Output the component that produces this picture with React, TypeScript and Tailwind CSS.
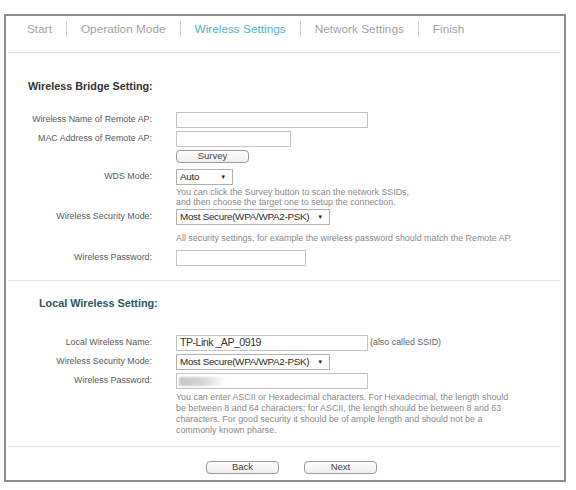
const font = { fontFamily: '"Liberation Sans", Arial, sans-serif' };

function Tab({ label, active }: { label: string; active?: boolean }) {
  return (
    <span className={`text-[11.8px] leading-[16px] ${active ? "text-[#4fb5c6]" : "text-[#a3a3a3]"}`}>
      {label}
    </span>
  );
}

function Sep() {
  return <span className="mx-[14px] h-[16px] w-px bg-[#d0d0d0]" />;
}

function Row({ label, children, className = "" }: { label: string; children: React.ReactNode; className?: string }) {
  return (
    <div className={`flex items-center ${className}`}>
      <div className="w-[146px] shrink-0 text-right text-[8.9px] text-[#5a5a5a]">{label}</div>
      <div className="ml-[24px] flex items-center">{children}</div>
    </div>
  );
}

function Box({ w, children }: { w: string; children?: React.ReactNode }) {
  return (
    <div className={`${w} relative flex h-[16px] items-center border border-[#c4c4c4] bg-white pl-[3px] text-[10.6px] tracking-[-0.5px] text-[#333]`}>
      {children}
    </div>
  );
}

function Select({ w, value }: { w: string; value: string }) {
  return (
    <div className={`${w} flex h-[16px] items-center justify-between border border-[#b0b0b0] bg-white pl-[3px] pr-[6px] text-[9.9px] tracking-[-0.3px] text-[#2a2a2a]`}>
      <span>{value}</span>
      <span className="text-[6px] text-[#222]">▼</span>
    </div>
  );
}

function Btn({ label }: { label: string }) {
  return (
    <div className="flex h-[13px] w-[73px] items-center justify-center rounded-[4px] border border-[#9a9a9a] bg-gradient-to-b from-white to-[#eeeeee] text-[9.5px] text-[#444]">
      {label}
    </div>
  );
}

export default function App() {
  return (
    <div className="h-[490px] w-[576px] bg-white pt-[14px] pl-[4px]" style={font}>
      <div className="h-[468px] w-[562px] border-2 border-[#8e8e8e] pl-[2px] pr-[4px]">
        {/* step tabs */}
        <div className="flex h-[37px] items-start border-b border-[#e3e3e3] pl-[19px] pt-[5px]">
          <div className="flex items-center">
            <Tab label="Start" />
            <Sep />
            <Tab label="Operation Mode" />
            <Sep />
            <Tab label="Wireless Settings" active />
            <Sep />
            <Tab label="Network Settings" />
            <Sep />
            <Tab label="Finish" />
          </div>
        </div>

        <div className="-ml-[2px]">
          <h3 className="mt-[26px] ml-[22px] text-[10.8px] leading-[14px] font-bold text-[#333]">Wireless Bridge Setting:</h3>

          <Row label="Wireless Name of Remote AP:" className="mt-[19px]">
            <Box w="w-[192px]" />
          </Row>
          <Row label="MAC Address of Remote AP:" className="mt-[3px]">
            <Box w="w-[115px]" />
          </Row>
          <div className="mt-[3px] ml-[170px]">
            <Btn label="Survey" />
          </div>
          <Row label="WDS Mode:" className="mt-[6px]">
            <Select w="w-[57px]" value="Auto" />
          </Row>
          <p className="mt-[2px] ml-[170px] text-[8.9px] leading-[10px] text-[#8a8a8a]">
            You can click the Survey button to scan the network SSIDs,
            <br />
            and then choose the target one to setup the connection.
          </p>
          <Row label="Wireless Security Mode:" className="mt-[2px]">
            <Select w="w-[154px]" value="Most Secure(WPA/WPA2-PSK)" />
          </Row>
          <p className="mt-[8px] ml-[170px] text-[8.9px] leading-[10px] text-[#8a8a8a]">
            All security settings, for example the wireless password should match the Remote AP.
          </p>
          <Row label="Wireless Password:" className="mt-[7px]">
            <Box w="w-[130px]" />
          </Row>
        </div>

        <div className="mt-[14px] border-t border-[#e3e3e3]" />

        <div className="-ml-[2px]">
          <h3 className="mt-[15px] ml-[33px] text-[10.8px] leading-[14px] font-bold text-[#2d5566]">Local Wireless Setting:</h3>

          <Row label="Local Wireless Name:" className="mt-[25px]">
            <Box w="w-[192px]">TP-Link _AP_0919</Box>
            <span className="ml-[2px] text-[8.9px] text-[#666]">(also called SSID)</span>
          </Row>
          <Row label="Wireless Security Mode:" className="mt-[3px]">
            <Select w="w-[154px]" value="Most Secure(WPA/WPA2-PSK)" />
          </Row>
          <Row label="Wireless Password:" className="mt-[3px]">
            <Box w="w-[192px]">
              <div className="absolute left-[2px] top-[3px] h-[9px] w-[46px] bg-gradient-to-r from-[#c6c6c6] via-[#d4d4d4] to-white blur-[1px]" />
            </Box>
          </Row>
          <p className="mt-[3px] ml-[170px] whitespace-nowrap text-[8.9px] leading-[11px] text-[#8a8a8a]">
            You can enter ASCII or Hexadecimal characters. For Hexadecimal, the length should
            <br />
            be between 8 and 64 characters; for ASCII, the length should be between 8 and 63
            <br />
            characters. For good security it should be of ample length and should not be a
            <br />
            commonly known pharse.
          </p>
        </div>

        <div className="mt-[10px] border-t border-[#e3e3e3]" />

        <div className="mt-[14px] flex gap-[25px] pl-[198px]">
          <Btn label="Back" />
          <Btn label="Next" />
        </div>
      </div>
    </div>
  );
}
